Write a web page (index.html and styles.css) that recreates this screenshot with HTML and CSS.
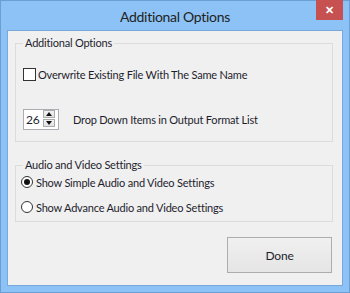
FILE: index.html
```html
<!doctype html>
<html lang="en">
  <head>
    <meta charset="UTF-8" />
    <title>Additional Options</title>
    <link rel="stylesheet" href="styles.css">
  </head>
  <body>
    <div class="window">
      <div class="titlebar">
        <div class="title">Additional Options</div>
        <div class="close">&#x2715;</div>
      </div>

      <div class="client">
        <div class="group group-options">
          <span class="group-title">Additional Options</span>
          <div class="row">
            <span class="check"></span>
            <span>Overwrite Existing File With The Same Name</span>
          </div>
          <div class="row spin-row">
            <div class="spin">
              <span class="spin-value">26</span>
              <div class="spin-buttons">
                <span class="spin-btn up"></span>
                <span class="spin-btn down"></span>
              </div>
            </div>
            <span>Drop Down Items in Output Format List</span>
          </div>
        </div>

        <div class="group group-media">
          <span class="group-title">Audio and Video Settings</span>
          <div class="row">
            <span class="radio checked"></span>
            <span>Show Simple Audio and Video Settings</span>
          </div>
          <div class="row radio-row">
            <span class="radio"></span>
            <span>Show Advance Audio and Video Settings</span>
          </div>
        </div>

        <div class="actions">
          <button class="btn">Done</button>
        </div>
      </div>
    </div>
  </body>
</html>
```

FILE: styles.css
```css
* {
  margin: 0;
  padding: 0;
  box-sizing: border-box;
}

body {
  font-family: Lato, "Liberation Sans", sans-serif;
  font-size: 11px;
  letter-spacing: -0.2px;
  color: #1e1e2e;
  background: #8cc2f5;
}

.window {
  width: 350px;
  height: 293px;
  background: #8cc2f5;
  border: 1px solid #6a9fd6;
  padding: 0 6px 6px 6px;
  display: flex;
  flex-direction: column;
}

.titlebar {
  position: relative;
  height: 29px;
  display: flex;
  align-items: center;
  justify-content: center;
}

.title {
  font-size: 14px;
  letter-spacing: -0.3px;
  color: #222;
  padding-top: 1px;
}

.close {
  position: absolute;
  top: -1px;
  right: 0;
  width: 27px;
  height: 20px;
  background: #c75050;
  color: white;
  font-size: 11px;
  font-weight: bold;
  letter-spacing: 0;
  display: flex;
  align-items: center;
  justify-content: center;
}

.client {
  flex: 1;
  background: #f0f0f0;
  border: 1px solid #78a8dc;
  display: flex;
  flex-direction: column;
}

/* group box: caption sits over the top border */
.group {
  position: relative;
  border: 1px solid #dcdcdc;
  margin-left: 7px;
  width: 318px;
  padding-left: 7px;
  padding-right: 8px;
}

.group-title {
  position: absolute;
  top: -9px;
  left: 7px;
  padding: 0 2px;
  line-height: 16px;
  background: #f0f0f0;
}

.group-options {
  margin-top: 12px;
  padding-top: 22px;
  padding-bottom: 11px;
}

.group-media {
  margin-top: 23px;
  padding-top: 8px;
  padding-bottom: 6px;
}

.row {
  display: flex;
  align-items: center;
  height: 16px;
  white-space: nowrap;
}

.radio-row {
  margin-top: 9px;
}

.check {
  width: 13px;
  height: 13px;
  border: 1px solid #333;
  background: white;
  margin-right: 2px;
}

.spin-row {
  margin-top: 27px;
  height: 21px;
}

.spin {
  width: 36px;
  height: 21px;
  border: 1px solid #abadb3;
  background: white;
  display: flex;
  align-items: center;
  justify-content: space-between;
  padding: 0 3px 0 2px;
  margin-right: 14px;
  font-size: 12px;
}

.spin-buttons {
  display: flex;
  flex-direction: column;
  gap: 1px;
  margin-top: -3px;
}

.spin-btn {
  position: relative;
  width: 12px;
  height: 8px;
  border: 1px solid #acacac;
  background: linear-gradient(#f2f2f2, #e2e2e2);
}

.spin-btn:after {
  content: "";
  position: absolute;
  left: 2px;
  width: 0;
  height: 0;
  border-left: 3px solid transparent;
  border-right: 3px solid transparent;
}

.spin-btn.up:after {
  top: 1px;
  border-bottom: 4px solid #111;
}

.spin-btn.down:after {
  top: 1px;
  border-top: 4px solid #111;
}

.radio {
  position: relative;
  width: 12px;
  height: 12px;
  border: 1px solid #333;
  border-radius: 50%;
  background: white;
  margin-left: -2px;
  margin-right: 3px;
}

.radio.checked:after {
  content: "";
  position: absolute;
  left: 2px;
  top: 2px;
  width: 6px;
  height: 6px;
  border-radius: 50%;
  background: #111;
}

.actions {
  display: flex;
  justify-content: flex-end;
  padding: 15px 10px 0 0;
}

.btn {
  width: 105px;
  height: 36px;
  border: 1px solid #adadad;
  background: linear-gradient(#f0f0f0, #e5e5e5);
  font-family: inherit;
  font-size: 12px;
  letter-spacing: -0.2px;
  color: #1e1e2e;
}
```
